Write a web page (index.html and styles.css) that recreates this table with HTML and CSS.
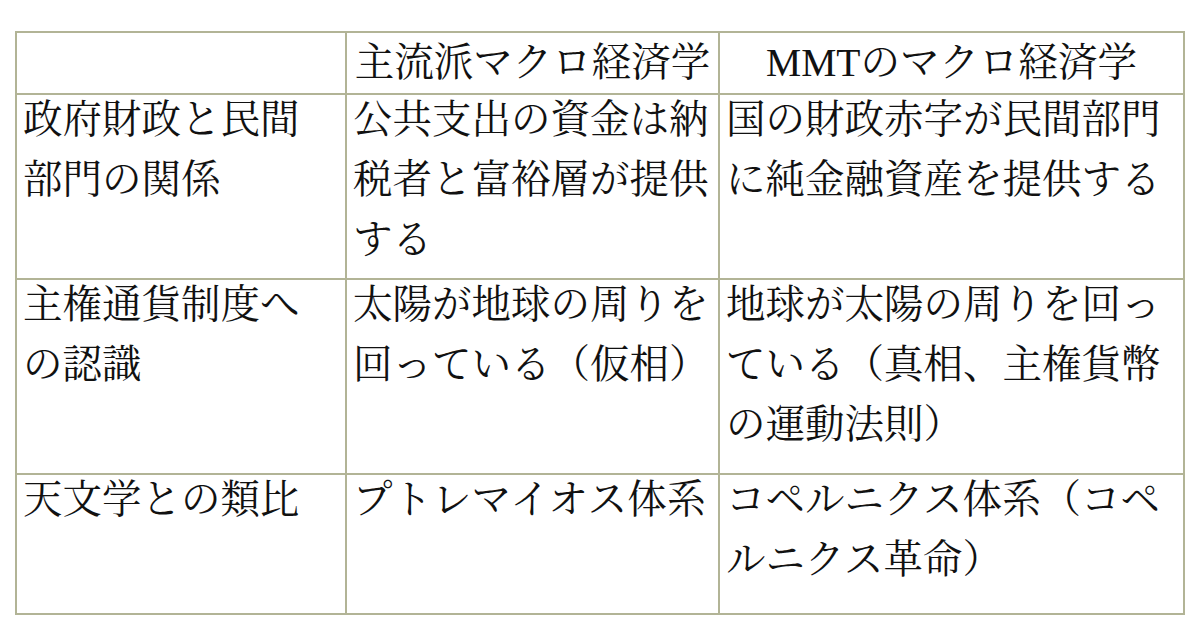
FILE: index.html
```html
<!DOCTYPE html>
<html lang="ja">
<head>
<meta charset="utf-8">
<link rel="stylesheet" href="styles.css">
</head>
<body>
<table class="cmp">
  <colgroup>
    <col class="c1"><col class="c2"><col class="c3">
  </colgroup>
  <tr class="r0">
    <td></td>
    <td class="hd">主流派マクロ経済学</td>
    <td class="hd">MMTのマクロ経済学</td>
  </tr>
  <tr class="r1">
    <td><div class="tx">政府財政と民間<br>部門の関係</div></td>
    <td><div class="tx">公共支出の資金は納<br>税者と富裕層が提供<br>する</div></td>
    <td><div class="tx">国の財政赤字が民間部門<br>に純金融資産を提供する</div></td>
  </tr>
  <tr class="r2">
    <td><div class="tx">主権通貨制度へ<br>の認識</div></td>
    <td><div class="tx">太陽が地球の周りを<br>回っている（仮相）</div></td>
    <td><div class="tx">地球が太陽の周りを回っ<br>ている（真相、主権貨幣<br>の運動法則）</div></td>
  </tr>
  <tr class="r3">
    <td><div class="tx">天文学との類比</div></td>
    <td><div class="tx">プトレマイオス体系</div></td>
    <td><div class="tx">コペルニクス体系（コペ<br>ルニクス革命）</div></td>
  </tr>
</table>
</body>
</html>
```
FILE: styles.css
```css
html, body {
  margin: 0;
  padding: 0;
  background: #ffffff;
}
body {
  font-family: "Liberation Serif", "Noto Serif CJK JP", "Noto Sans CJK JP", serif;
  color: #111111;
}
.cmp {
  border-collapse: collapse;
  margin: 31px 0 0 15px;
  table-layout: fixed;
  width: 1168px;
}
.c1 { width: 330px; }
.c2 { width: 373px; }
.c3 { width: 465px; }
.cmp td {
  border: 2px solid #b2b496;
  padding: 0 0 0 6px;
  vertical-align: top;
  font-size: 39.5px;
  line-height: 60px;
  white-space: nowrap;
  overflow: hidden;
}
.cmp td.hd {
  text-align: center;
  vertical-align: middle;
  padding: 0;
}
.tx {
  margin-top: -5px;
}
.r0 { height: 60px; }
.r1 { height: 185px; }
.r2 { height: 195px; }
.r3 { height: 140px; }
```
